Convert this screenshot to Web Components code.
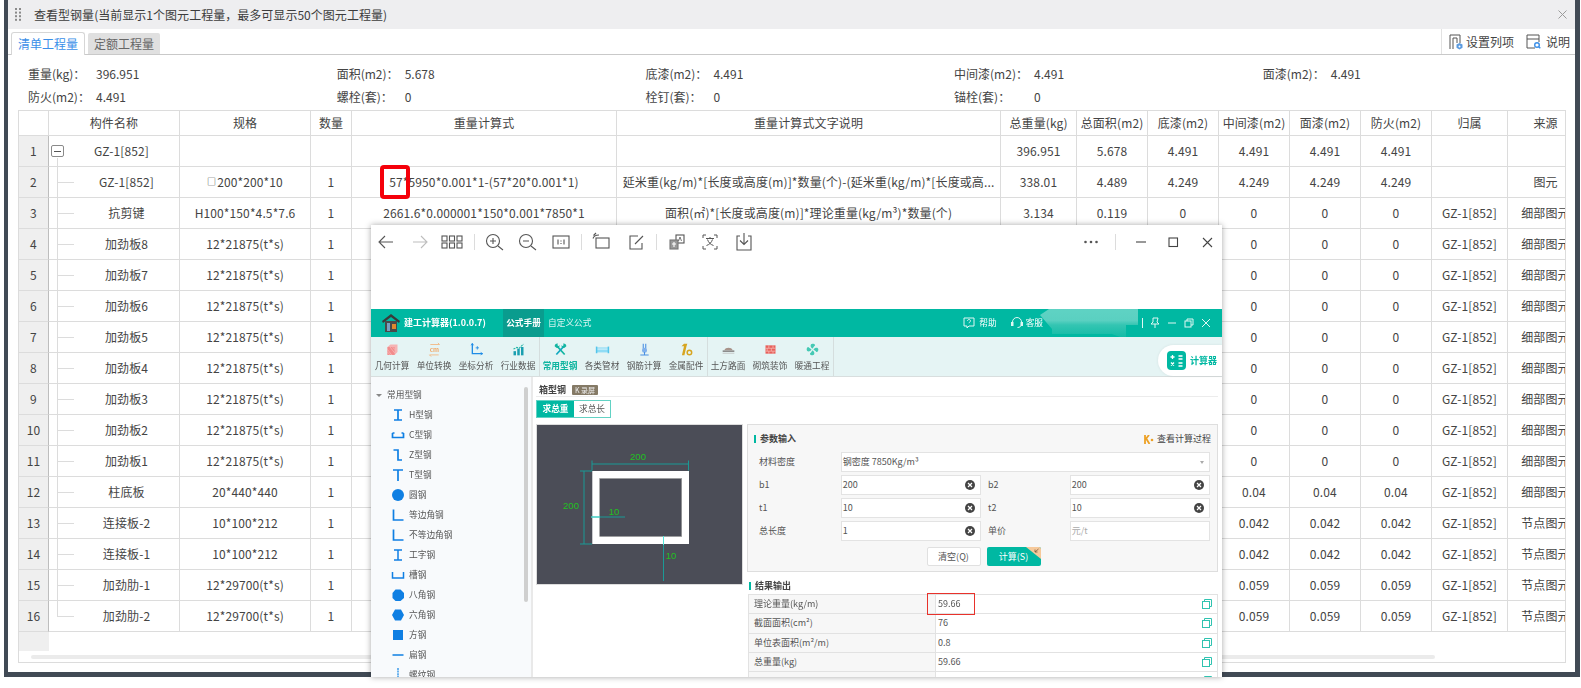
<!DOCTYPE html>
<html lang="zh"><head><meta charset="utf-8"><title>查看型钢量</title>
<style>
html,body{margin:0;padding:0;background:#fff;height:688px;overflow:hidden;font-family:"Noto Sans CJK SC","Liberation Sans",sans-serif;font-size:12px;color:#444}
</style></head><body>
<steel-frame>
  <steel-dialog>
    <steel-title>查看型钢量(当前显示1个图元工程量，最多可显示50个图元工程量)</steel-title>
    <steel-tabs></steel-tabs>
    <steel-summary></steel-summary>
    <steel-grid></steel-grid>
  </steel-dialog>
</steel-frame>
<steel-viewer>
  <calc-app></calc-app>
</steel-viewer>
<script>
function def(name, css, html, init){
  customElements.define(name, class extends HTMLElement{
    constructor(){super();const r=this.attachShadow({mode:'open'});
      r.innerHTML='<style>'+css+'</style>'+(typeof html==='function'?html():html);
      if(init)init(r,this);}
  });
}
const CJK='"Noto Sans CJK SC","Liberation Sans",sans-serif';

def('steel-frame',`:host{display:block;margin-left:4px;width:1576px;height:677px;box-sizing:border-box;background:#414a55;padding:0 5px 5px 4px}`,`<slot></slot>`);
def('steel-dialog',`:host{display:flex;flex-direction:column;height:100%;background:#fff;font:12px/16px ${CJK};color:#444}`,`<slot></slot>`);

def('steel-title',`:host{display:flex;align-items:center;height:29px;background:#eeeef0;padding-left:7px;flex:none;color:#3c3c3c;letter-spacing:.03px}
 svg{margin-right:13px;flex:none} .x{margin-left:auto;margin-right:6px}`,
 `<svg width="6" height="13" viewBox="0 0 6 13" style="margin-right:13px"><g fill="#8a8a8a"><rect width="2" height="2"/><rect x="4" width="2" height="2"/><rect y="3.6" width="2" height="2"/><rect x="4" y="3.6" width="2" height="2"/><rect y="7.2" width="2" height="2"/><rect x="4" y="7.2" width="2" height="2"/><rect y="10.8" width="2" height="2"/><rect x="4" y="10.8" width="2" height="2"/></g></svg><slot></slot>
 <svg class="x" width="9" height="9" viewBox="0 0 9 9" style="margin-right:8px"><path d="M.5.5l8 8M8.5.5l-8 8" stroke="#9a9a9a" fill="none"/></svg>`);

def('steel-tabs',`:host{display:flex;align-items:flex-end;height:26px;box-sizing:border-box;border-bottom:1px solid #c9c9c9;padding-left:3px;flex:none}
 .t{box-sizing:border-box;display:flex;align-items:center;justify-content:center}
 .a{width:74px;height:23px;margin-bottom:-1px;background:#fff;border:1px solid #d6d6d6;border-bottom:0;border-radius:3px 3px 0 0;color:#3b8fe8}
 .b{width:72px;height:21px;margin-left:3px;background:#e0e0e0;color:#666;border-radius:2px 2px 0 0}
 .r{margin-left:auto;align-self:stretch;border-left:1px solid #e2e2e2;display:flex;align-items:center;width:134px;box-sizing:border-box;padding-left:7px;color:#444}
 svg{flex:none}`,
 `<div class="t a">清单工程量</div><div class="t b">定额工程量</div>
 <div class="r"><svg width="14" height="16" viewBox="0 0 14 16"><path d="M1 15V1h10v8M4 15V4h4v5" fill="none" stroke="#555"/><path d="M10.5 9l3 1.6v3.2l-3 1.7-3-1.7v-3.2z" fill="#5b9be0"/><circle cx="10.5" cy="12.4" r="1" fill="#fff"/></svg>
 <span style="margin-left:3px">设置列项</span>
 <svg style="margin-left:12px" width="15" height="15" viewBox="0 0 15 15"><path d="M9 14H1V1h12v7M1 5h12" fill="none" stroke="#555"/><circle cx="11" cy="11" r="2.3" fill="none" stroke="#3b8fe8" stroke-width="1.4"/><path d="M12.7 12.7l1.6 1.6" stroke="#3b8fe8" stroke-width="1.4"/></svg>
 <span style="margin-left:5px">说明</span></div>`);

def('steel-summary',`:host{display:grid;grid-template-columns:repeat(5,308.7px);grid-auto-rows:23px;padding:7px 0 2px 20px;flex:none;white-space:nowrap}
 .c{display:flex;align-items:center} .l{width:68px;flex:none} .w{width:80px}`,
 ()=>[['重量(kg)：','396.951'],['面积(m2)：','5.678'],['底漆(m2)：','4.491'],['中间漆(m2)：','4.491',1],['面漆(m2)：','4.491'],
   ['防火(m2)：','4.491'],['螺栓(套)：','0'],['栓钉(套)：','0'],['锚栓(套)：','0',1]]
   .map(a=>`<div class="c"><span class="l ${a[2]?'w':''}">${a[0]}</span><span>${a[1]}</span></div>`).join(''));

const G='GZ-1[852]';
function gridRows(){
  const head=['','构件名称','规格','数量','重量计算式','重量计算式文字说明','总重量(kg)','总面积(m2)','底漆(m2)','中间漆(m2)','面漆(m2)','防火(m2)','归属','来源'];
  const rows=[
   ['GZ-1[852]','','','','','396.951','5.678','4.491','4.491','4.491','4.491','',''],
   ['GZ-1[852]','<small>□</small>200*200*10','1','57*5950*0.001*1-(57*20*0.001*1)','延米重(kg/m)*[长度或高度(m)]*数量(个)-(延米重(kg/m)*[长度或高...','338.01','4.489','4.249','4.249','4.249','4.249','','图元'],
   ['抗剪键','H100*150*4.5*7.6','1','2661.6*0.000001*150*0.001*7850*1','面积(㎡)*[长度或高度(m)]*理论重量(kg/m³)*数量(个)','3.134','0.119','0','0','0','0',G,'细部图元']];
  for(let i=8;i>=1;i--) rows.push(['加劲板'+i,'12*21875(t*s)','1','','','','','','0','0','0',G,'细部图元']);
  const tail=(n,s,v,k)=>[n,s,'1','','','','','',v,v,v,G,k];
  rows.push(tail('柱底板','20*440*440','0.04','细部图元'),tail('连接板-2','10*100*212','0.042','节点图元'),tail('连接板-1','10*100*212','0.042','节点图元'),tail('加劲肋-1','12*29700(t*s)','0.059','节点图元'),tail('加劲肋-2','12*29700(t*s)','0.059','节点图元'));
  let h=head.map((t,i)=>`<div class="c h ${i==0?'n0':''}">${t}</div>`).join('');
  rows.forEach((r,ri)=>{
    h+=`<div class="c n">${ri+1}</div>`;
    r.forEach((t,ci)=>{
      if(ci==0){
        if(ri==0) h+=`<div class="c name first"><span class="box"></span><span class="nm">${t}</span></div>`;
        else h+=`<div class="c name ${ri==15?'last':''}"><span class="nm">${t}</span></div>`;
      } else if(ci==4){ h+=`<div class="c desc"><span>${t}</span></div>`; }
      else if(ci==12){ h+=`<div class="c src"><span>${t}</span></div>`; }
      else h+=`<div class="c">${t}</div>`;
    });
  });
  return h;
}
def('steel-grid',`:host{display:block;position:relative;box-sizing:border-box;margin:0 9px 0 10px;height:553px;border:1px solid #dcdcdc;overflow:hidden;color:#444;letter-spacing:.12px}
 .g{display:grid;width:max-content;grid-template-columns:30px 131px 131px 41px 265px 384px 76px 71px 71px 71px 71px 71px 76px 76px;grid-template-rows:25px repeat(16,31px)}
 .c{box-sizing:border-box;border-right:1px solid #dcdcdc;border-bottom:1px solid #dcdcdc;display:flex;align-items:center;justify-content:center;white-space:nowrap;overflow:hidden;min-width:0}
 .n{background:#efefef;border-right-color:#bdbdbd}
 .n0{border-right-color:#dcdcdc}
 small{font-size:9px;margin-right:1px;color:#333}
 .desc span{display:block}
 .src span{flex:none}
 .name{padding-left:25px;background:linear-gradient(#dcdcdc,#dcdcdc) 8px 0/1px 100% no-repeat,linear-gradient(#dcdcdc,#dcdcdc) 8px 15px/17px 1px no-repeat}
 .name.last{background:linear-gradient(#dcdcdc,#dcdcdc) 8px 0/1px 15px no-repeat,linear-gradient(#dcdcdc,#dcdcdc) 8px 15px/17px 1px no-repeat}
 .name.first{padding-left:2px;justify-content:flex-start;background:linear-gradient(#dcdcdc,#dcdcdc) 8px 22px/1px 9px no-repeat}
 .box{width:13px;height:12px;box-sizing:border-box;border:1px solid #8a8a8a;border-radius:2px;flex:none;background:linear-gradient(#555,#555) center/7px 1px no-repeat #fff}
 .nm{flex:1;text-align:center}
 .foot{width:30px;height:19px;background:#efefef}
 .sb{width:1404px;height:4px;margin:4px 0 0 12px;background:#ebebeb;border-radius:2px}
 .mark{position:absolute;left:361px;top:54px;width:30px;height:34px;box-sizing:border-box;border:4px solid #f5000a;border-radius:4px}`,
 ()=>`<div class="g">${gridRows()}</div><div class="foot"></div><div class="sb"></div><div class="mark"></div>`);

/* ---------- image viewer window ---------- */
const ic={
 back:'<path d="M18 11H5M10 5l-6 6 6 6"/>',
 fwd:'<path d="M4 11h13M12 5l6 6-6 6" stroke="#bdbdbd"/>',
 grid:'<rect x="1" y="5" width="5" height="5"/><rect x="8.5" y="5" width="5" height="5"/><rect x="16" y="5" width="5" height="5"/><rect x="1" y="12" width="5" height="5"/><rect x="8.5" y="12" width="5" height="5"/><rect x="16" y="12" width="5" height="5"/>',
 zi:'<circle cx="10" cy="10" r="6.5"/><path d="M15 15l5 4M7 10h6M10 7v6"/>',
 zo:'<circle cx="10" cy="10" r="6.5"/><path d="M15 15l5 4M7 10h6"/>',
 one:'<rect x="3" y="5" width="16" height="12"/><path d="M8 8.500v5M14 8.500v5M11 9.500v1M11 12v1"/>',
 rot:'<rect x="5" y="7" width="13" height="10"/><path d="M2 7.500Q3 4 8 4M5 2L2.500 4.500"/>',
 edit:'<path d="M17 12v6H5V5h8M10 13l8-8"/>',
 tr:'<rect x="10" y="4" width="8" height="8" fill="#fff"/><rect x="4" y="9" width="8" height="9" fill="#999" stroke="#777"/><path d="M6 13h4M8 11v5" stroke="#fff"/><path d="M12.500 10l1.500-4 1.500 4" stroke-width=".8"/>',
 scan:'<path d="M7 4H4v3M15 4h3v3M7 18H4v-3M15 18h3v-3M7 7.500h8M11 6v1.500M8.500 8.500c1 3 3 5 6 6M13.500 8.500c-1 3-3 5-6 6" stroke-width="1"/>',
 dl:'<path d="M7 5H4v14h14V5h-3M11 2v11M7 9.500l4 4 4-4"/>',
 dots:'<g fill="#555" stroke="none"><circle cx="5.500" cy="11" r="1.300"/><circle cx="11" cy="11" r="1.300"/><circle cx="16.500" cy="11" r="1.300"/></g>',
 min:'<path d="M6 11h10" stroke="#444"/>',
 sq:'<rect x="7" y="7" width="8.500" height="8.500" stroke="#444"/>',
 cl:'<path d="M7 7l9 9M16 7l-9 9" stroke="#444"/>'
};
const bar=[[386,'back'],[420,'fwd'],[452,'grid'],[474,0],[494,'zi'],[527,'zo'],[561,'one'],[581,0],[602,'rot'],[636,'edit'],[656,0],[677,'tr'],[710,'scan'],[744,'dl'],[1091,'dots'],[1115,0],[1141,'min'],[1173,'sq'],[1207,'cl']];
function barHtml(){
  let x=371,h='';
  for(const [c,k] of bar){
    const w=k?22:1, m=c-w/2-x; x=c+w/2;
    h+= k?`<svg style="margin-left:${m}px" width="22" height="22" viewBox="0 0 22 22">${ic[k]}</svg>`
         :`<i style="margin-left:${m}px"></i>`;
  }
  return h;
}
def('steel-viewer',`:host{display:flex;flex-direction:column;position:absolute;left:371px;top:225px;width:851px;height:452px;background:#fff;box-shadow:0 0 6px rgba(0,0,0,.35);overflow:hidden;font-family:${CJK}}
 .bar{display:flex;align-items:center;height:34px;flex:none}
 svg{flex:none;fill:none;stroke:#555;stroke-width:1.100}
 i{width:1px;height:16px;background:#dcdcdc;flex:none;display:block}
 .gap{height:50px;flex:none}
 ::slotted(*){flex:1;min-height:0}`,
 ()=>`<div class="bar">${barHtml()}</div><div class="gap"></div><slot></slot>`);

const tools=[
 ['几何计算','<path d="M3 6l3.500-3H15v9l-3.500 3.500H3z" fill="#f6b3b3"/><path d="M3 6h8.500v9.500H3z" fill="#f28b8b"/><path d="M3 9l5 6.500M3 12l3 3.500M6 6l5.500 7M9 6l2.500 3" stroke="#f9c8c8" stroke-width=".7"/>'],
 ['单位转换','<path d="M4 3h11l-2-2M14 15.500H3l2 2" stroke="#f3b37a" fill="none"/><text x="9" y="11.500" text-anchor="middle" font-size="7.500" font-weight="700" fill="#f0a868">cm</text>'],
 ['坐标分析','<path d="M4 2v12h12" stroke="#1f8ce6" fill="none" stroke-width="1.600"/><path d="M2.500 4L4 1.500 5.500 4M14 12.500l2.500 1.500-2.500 1.500" stroke="#1f8ce6" fill="none"/><path d="M10 5v4M8 7h4" stroke="#1f8ce6"/>'],
 ['行业数据','<g fill="#1a9fb0"><rect x="3" y="11" width="3" height="5"/><rect x="7.500" y="8" width="3" height="8"/><rect x="12" y="6" width="3" height="10"/></g><path d="M3 8.500l4-2 3 .8L15 2.500" stroke="#22b5a5" fill="none" stroke-dasharray="2.500 1" stroke-width="1.300"/>'],
 ['常用型钢','<path d="M4 4l10 11" stroke="#13b5a2" stroke-width="2"/><path d="M14 4L4 15" stroke="#13a9c0" stroke-width="2"/><path d="M2 5a3 3 0 014-3L5 4l1 1 2-1a3 3 0 01-4 3zM16 5a3 3 0 00-4-3l1 2-1 1-2-1a3 3 0 004 3z" fill="#13b5a2"/>',1],
 ['各类管材','<rect x="2" y="6.500" width="14" height="6" fill="#8fdcf5"/><rect x="1" y="5.500" width="1.800" height="8" fill="#55c5ea"/><rect x="15.200" y="5.500" width="1.800" height="8" fill="#55c5ea"/><path d="M3 8.500h12" stroke="#e8f8fd"/>'],
 ['钢筋计算','<path d="M7.500 2v6M10.500 2v6" stroke="#4a90e2" stroke-width="1.300"/><rect x="6" y="7" width="6" height="6" rx="3" fill="#7fb0ec"/><path d="M4 15.500h10M9 12v3" stroke="#4a90e2" stroke-width="1.300"/>'],
 ['金属配件','<path d="M3 5l3-3h4l-1 3-2.500 11H3.500L6 5z" fill="#d7a520"/><circle cx="12.500" cy="12.500" r="2.700" fill="none" stroke="#d7a520" stroke-width="1.800"/>'],
 ['土方路面','<path d="M2 10h14v2H2z" fill="#8d8d8d"/><path d="M4 10c1-4 9-4 10 0z" fill="#a8938a"/><path d="M2 13.500h14" stroke="#c0c0c0"/>'],
 ['砌筑装饰','<path d="M3 4h12v10H3z" fill="#e8605b"/><path d="M3 7.500h12M3 11h12M7 4v3.500M12 4v3.500M5 7.500V11M10 7.500V11M7 11v3M12 11v3" stroke="#f7c5c0" stroke-width=".8"/>'],
 ['暖通工程','<g fill="#45c9b4"><path d="M9 8C6 6 6 2 9 2c3 0 4 2 2 3z"/><path d="M10 9c2-3 6-3 6 0 0 3-2 4-3 2z"/><path d="M9 10c3 2 3 6 0 6-3 0-4-2-2-3z"/><path d="M8 9C6 12 2 12 2 9c0-3 2-4 3-2z"/></g><circle cx="9" cy="9" r="1" fill="#e5f4f4"/>']
];
const stBlue='#0f7fe3';
const st=[
 ['H型钢','<path d="M3 2h8M7 2v10M3 12h8" stroke-width="1.700"/>'],
 ['C型钢','<path d="M1.500 5v4.500h11V5M1.500 5h2M12.500 5h-2" stroke-width="1.700"/>'],
 ['Z型钢','<path d="M2.500 2H7v10h4" stroke-width="1.700"/>'],
 ['T型钢','<path d="M2 2h10M7 2v11" stroke-width="1.700"/>'],
 ['圆钢','<circle cx="7" cy="7" r="6" fill="'+stBlue+'" stroke="none"/>'],
 ['等边角钢','<path d="M2.500 1.500v10.500h10" stroke-width="1.700"/>'],
 ['不等边角钢','<path d="M2.500 1.500v10.500h10" stroke-width="1.700"/>'],
 ['工字钢','<path d="M3 2h8M7 2v10M3 12h8" stroke-width="1.500"/>'],
 ['槽钢','<path d="M1.500 4v6h11V4" stroke-width="1.500"/>'],
 ['八角钢','<path d="M4.500 1.500h5L13 5v5l-3.500 3h-5L1.500 10V5z" fill="'+stBlue+'" stroke="none"/>'],
 ['六角钢','<path d="M4 1.500h6L13 7l-3 5.500H4L1 7z" fill="'+stBlue+'" stroke="none"/>'],
 ['方钢','<rect x="2" y="2" width="10" height="10" fill="'+stBlue+'" stroke="none"/>'],
 ['扁钢','<path d="M1.500 7h11" stroke-width="1.500"/>'],
 ['螺纹钢','<path d="M7 0v14" stroke-width="1.500" stroke-dasharray="2 .6" stroke="#3c9be8"/>']
];
def('calc-app',`:host{display:flex;flex-direction:column;font:8.700px/12px ${CJK};color:#555;filter:blur(.3px);overflow:hidden;position:relative}
 .top{height:28px;flex:none;background:#00b8a2;color:#fff;display:flex;align-items:center;position:relative}
 .logo{margin-left:10px;flex:none}
 .ttl{font-size:9px;font-weight:700;margin-left:3px;width:99px;flex:none}
 .t1{align-self:stretch;width:41px;background:#0a9c8e;display:flex;align-items:center;justify-content:center;font-weight:700;flex:none}
 .t2{margin-left:4px;opacity:.85;flex:none}
 .tr{margin-left:auto;display:flex;align-items:center;padding-right:10px;flex:none}
 .tr svg{fill:none;stroke:#dff7f3;stroke-width:1;flex:none}
 .blob{position:absolute;left:669px;top:-2px}
 .tools{height:40px;flex:none;background:#e5f4f4;border-bottom:1px solid #d8dede;box-sizing:border-box;display:flex;position:relative}
 .tool{width:42px;flex:none;display:flex;flex-direction:column;align-items:center;padding-top:5px;box-sizing:border-box;white-space:nowrap}
 .tool svg{flex:none;margin-bottom:3px}
 .on{color:#0fb5a0;font-weight:700}
 .sep{width:1px;margin-right:-1px;background:#d5dede;flex:none}
 .pill{position:absolute;right:0;top:8px;width:64px;height:31px;background:#fff;border-radius:16px 0 0 16px;display:flex;align-items:center;box-shadow:0 0 3px rgba(0,0,0,.08);color:#00b8a2;font-weight:700;font-size:9px;padding-left:9px;box-sizing:border-box}
 .pill svg{margin-right:4px;flex:none}
 .body{flex:1;min-height:0;display:flex}
 .side{width:160px;flex:none;background:#f8fafc;border-right:2px solid #e9e9e9;box-sizing:content-box;padding-top:8px;position:relative;overflow:hidden}
 .row{height:20px;display:flex;align-items:center;white-space:nowrap}
 .row svg{fill:none;stroke:${stBlue};margin-left:20px;margin-right:4px;flex:none}
 .hd{padding-left:5px}.hd b{width:0;height:0;border:3px solid transparent;border-top:3px solid #888;border-bottom:0;margin-right:5px}
 .thumb{position:absolute;left:153px;top:10px;width:4px;height:215px;background:#cfcfcf;border-radius:2px}
 ::slotted(*){flex:1}`,
 ()=>{
  let tl='';
  tools.forEach((t,i)=>{
    tl+=`<div class="tool ${t[2]?'on':''}"><svg width="15" height="15" viewBox="0 0 18 18">${t[1]}</svg><span>${t[0]}</span></div>`;
    if(i==3||i==7||i==10) tl+='<div class="sep"></div>';
  });
  const tr=`<svg width="14" height="14" viewBox="0 0 14 14"><path d="M2 2h10v8H7l-2 2v-2H2z"/><path d="M5.500 5c0-2 3-2 3 0 0 1-1.500 1-1.500 2.200"/></svg><span style="margin:0 0 0 3px">帮助</span>
   <svg style="margin-left:13px" width="14" height="14" viewBox="0 0 14 14"><path d="M2.500 8V6a4.500 4.500 0 019 0v2c0 2.500-2 3.500-4 3.500"/><rect x="1.500" y="6.500" width="1.500" height="3" fill="#dff7f3"/><rect x="11" y="6.500" width="1.500" height="3" fill="#dff7f3"/></svg><span style="margin:0 0 0 2px">客服</span>
   <span style="width:1px;height:10px;background:#dff7f3;margin-left:99px"></span>
   <svg style="margin-left:6px" width="12" height="12" viewBox="0 0 12 12"><path d="M4 1h5l-1 4 2 2H2l2-2zM6 7v4"/></svg>
   <svg style="margin-left:5px" width="12" height="12" viewBox="0 0 12 12"><path d="M2 6h8"/></svg>
   <svg style="margin-left:5px" width="12" height="12" viewBox="0 0 12 12"><rect x="2" y="4" width="6" height="6"/><path d="M4 4V2h6v6H8"/></svg>
   <svg style="margin-left:5px" width="12" height="12" viewBox="0 0 12 12"><path d="M2 2l8 8M10 2l-8 8"/></svg>`;
  return `<div class="top">
    <svg class="logo" width="20" height="20" viewBox="0 0 20 20"><path d="M10 1L1 8l1 2 8-6 8 6 1-2z" fill="#3a3a3a"/><rect x="4" y="8" width="12" height="11" fill="#4a4a4a"/><rect x="6" y="10" width="3" height="8" fill="#7aa0c0"/><rect x="11" y="11" width="4" height="5" fill="#e08a2e"/></svg>
    <div class="ttl">建工计算器(1.0.0.7)</div><div class="t1">公式手册</div><div class="t2">自定义公式</div>
    <div class="tr">${tr}</div>
    <svg class="blob" width="98" height="30" viewBox="0 0 98 30"><defs><linearGradient id="bl" x1="0" y1="0" x2="0" y2="1"><stop offset="0" stop-color="#60d3c4"/><stop offset=".45" stop-color="#5ad0c1"/><stop offset=".6" stop-color="#34c5b2"/><stop offset="1" stop-color="#12bba6"/></linearGradient></defs><path d="M0 8L12 0h86v18H86v12H80l-8-3H20l-8 0V22z" fill="url(#bl)"/></svg>
  </div>
  <div class="tools">${tl}
    <div class="pill"><svg width="19" height="19" viewBox="0 0 19 19"><rect width="19" height="19" rx="4" fill="#00b8a2"/><path d="M3.500 6h4M5.500 4v4M11.500 5h4M11.500 8h4M4 11.500l3 3M7 11.500l-3 3M11.500 12h4M11.500 15h4" stroke="#fff" stroke-width="1.300"/></svg>计算器</div>
  </div>
  <div class="body">
    <div class="side"><div class="row hd"><b></b>常用型钢</div>
      ${st.map(s=>`<div class="row"><svg width="14" height="14" viewBox="0 0 14 14">${s[1]}</svg>${s[0]}</div>`).join('')}
      <div class="thumb"></div></div>
    <calc-main></calc-main>
  </div>`;
 });

def('calc-main',`:host{display:flex;flex-direction:column;flex:1;min-width:0;padding:7px 4px 0 3px;box-sizing:border-box;overflow:hidden}
 .hd{display:flex;align-items:center;height:12px;border-bottom:1px solid #ececec;padding:0 0 0 3px;font-weight:700;color:#444;font-size:9px;flex:none}
 .tag{margin-left:6px;width:26px;height:10px;background:#857a66;color:#eee;font-size:7px;line-height:10px;text-align:center;border-radius:1px;font-weight:400}
 .seg{display:flex;height:18px;width:75px;margin-top:3px;flex:none;box-sizing:border-box;border:1px solid #62d2c4}
 .seg div{display:flex;align-items:center;justify-content:center}
 .s1{width:37px;background:#00b8a2;color:#fff;font-weight:700}.s2{flex:1;background:#fff}
 .cols{display:flex;gap:4px;margin-top:6px;align-items:flex-start}
 .img{width:207px;height:161px;flex:none;display:block}
 .right{flex:1;min-width:0}`,
 `<div class="hd">箱型钢<span class="tag">K 录屏</span></div>
  <div class="seg"><div class="s1">求总重</div><div class="s2">求总长</div></div>
  <div class="cols">
   <svg class="img" viewBox="0 0 207 161">
    <rect x=".5" y=".5" width="206" height="160" fill="#4b4d57" stroke="#ddd"/>
    <rect x="56.300" y="47" width="96.700" height="73" fill="#fff"/>
    <rect x="63.700" y="54.500" width="82" height="58" fill="#4b4d57" stroke="#999" stroke-width=".6"/>
    <g stroke="#1b9a96" fill="none"><path d="M56 40h97M56 36.500v10M152.500 36.500v10M48 47v73M44 47h12M44 120h12"/><path d="M55 93h34M127.500 112v45" /></g>
    <g stroke="#53e6da" fill="none"><path d="M55 93h9M127.500 112v9"/></g>
    <g fill="#1fc01f" font-family="Liberation Sans,sans-serif" font-size="9.500" text-anchor="middle"><text x="102" y="36">200</text><text x="35" y="85">200</text><text x="78" y="91">10</text><text x="135" y="134.500">10</text></g>
   </svg>
   <div class="right"><calc-params></calc-params><calc-result></calc-result></div>
  </div>`);

const xIcon=`<svg width="10" height="10" viewBox="0 0 10 10"><circle cx="5" cy="5" r="5" fill="#444"/><path d="M3 3l4 4M7 3L3 7" stroke="#fff" stroke-width="1.200"/></svg>`;
def('calc-params',`:host{display:block;box-sizing:border-box;height:148px;background:#f7f7f7;border:1px solid #dedede;padding:4px 7px 0 11px;color:#555;font-size:9px}
 .h{display:flex;align-items:center;height:20px;margin-left:-5px;font-weight:700;color:#444}
 .h i{width:2px;height:8px;background:#00b8a2;margin-right:4px}
 .h span{margin-left:auto;font-weight:400;display:flex;align-items:center;margin-right:-1px}
 .h svg{margin-right:3px}
 .f{display:grid;grid-template-columns:81.700px 140px 7.300px 81.700px 140px;grid-auto-rows:20px;row-gap:3px;margin-top:3px;align-items:center}
 .i{box-sizing:border-box;height:20px;background:#fff;border:1px solid #e3e3e3;display:flex;align-items:center;justify-content:space-between;padding:0 5px 0 1px}
 .sel{grid-column:2/6;width:100%}
 .ar{width:0;height:0;border:2.500px solid transparent;border-top:3px solid #aaa;border-bottom:0;margin-right:0}
 .ph{color:#aaa}
 .btns{display:flex;justify-content:center;gap:6px;margin-top:6px;margin-left:-2px}
 .b{width:54px;height:19px;box-sizing:border-box;border:1px solid #e0e0e0;background:#fff;display:flex;align-items:center;justify-content:center;border-radius:2px;position:relative;overflow:hidden}
 .go{background:#00b8a2;color:#fff;border:0}
 .go svg{position:absolute;right:0;top:0}`,
 `<div class="h"><i></i>参数输入<span><svg width="10" height="9" viewBox="0 0 10 9"><path d="M1 0v9M1 5l4-5M2.500 4l3 5" stroke="#eda125" stroke-width="1.800" fill="none"/><circle cx="8" cy="5" r="1.300" fill="#eda125"/></svg>查看计算过程</span></div>
  <div class="f">
   <div>材料密度</div><div class="i sel"><span>钢密度 7850Kg/m³</span><b class="ar"></b></div>
   <div>b1</div><div class="i"><span>200</span>${xIcon}</div><div></div><div>b2</div><div class="i"><span>200</span>${xIcon}</div>
   <div>t1</div><div class="i"><span>10</span>${xIcon}</div><div></div><div>t2</div><div class="i"><span>10</span>${xIcon}</div>
   <div>总长度</div><div class="i"><span>1</span>${xIcon}</div><div></div><div>单价</div><div class="i"><span class="ph">元/t</span></div>
  </div>
  <div class="btns"><div class="b">清空(Q)</div><div class="b go">计算(S)<svg width="15" height="12" viewBox="0 0 15 12"><path d="M0 0h15v12z" fill="#f6c99b"/><path d="M12.500 2L9 5M9 2.500V5h2.500" stroke="#7a5a3c" fill="none" stroke-width=".8"/></svg></div></div>`);

const copyI=`<svg width="10" height="10" viewBox="0 0 10 10" fill="none" stroke="#2fc3b0"><rect x=".5" y="2.500" width="7" height="7"/><path d="M2.500 2.500V.5h7v7h-2"/></svg>`;
def('calc-result',`:host{display:block;margin:8px 0 0 1px;color:#555;font-size:9px;position:relative}
 .h{display:flex;align-items:center;height:12px;font-weight:700;color:#444;margin-bottom:2px}
 .h i{width:2px;height:8px;background:#00b8a2;margin:0 4px 0 1px}
 .t{display:grid;grid-template-columns:187px 1fr;grid-auto-rows:19.300px;border:1px solid #e2e2e2;border-bottom:0}
 .c{display:flex;align-items:center;border-bottom:1px solid #e2e2e2;box-sizing:border-box;padding:0 5px;background:#f7f7f7;border-right:1px solid #e2e2e2}
 .v{background:#fff;border-right:0;padding:0 5px 0 2px;justify-content:space-between}
 .mk{position:absolute;left:179px;top:13px;width:48px;height:22px;box-sizing:border-box;border:1.500px solid #e8322b}`,
 ()=>`<div class="h"><i></i>结果输出</div><div class="t">${[['理论重量(kg/m)','59.66'],['截面面积(cm²)','76'],['单位表面积(m²/m)','0.8'],['总重量(kg)','59.66'],['','']].map(r=>`<div class="c">${r[0]}</div><div class="c v"><span>${r[1]}</span>${copyI}</div>`).join('')}</div><div class="mk"></div>`);
</script>
</body></html>
